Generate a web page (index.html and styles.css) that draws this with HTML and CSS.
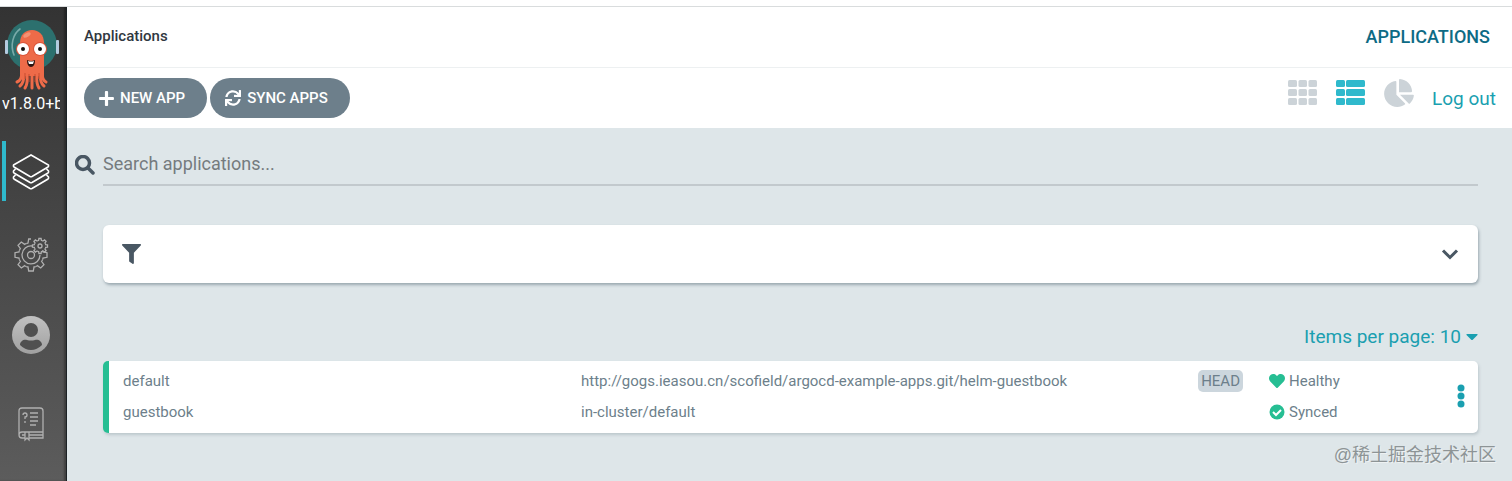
FILE: index.html
```html
<!DOCTYPE html>
<html lang="en">
<head>
    <meta charset="UTF-8">
    <meta name="viewport" content="width=device-width, initial-scale=1.0">
    <title>Applications</title>
    <link rel="stylesheet" href="styles.css">
</head>
<body>
    <div class="layout">
        <nav class="sidebar">
            <a class="logo" href="#" aria-label="Home">
                <svg width="58" height="74" viewBox="3 18 58 74">
                    <circle cx="32" cy="45" r="25" fill="#2c706e"/>
                    <path d="M14 55C10 45 13 34 20 29" fill="none" stroke="#79aaa9" stroke-width="1.6" stroke-linecap="round"/>
                    <rect x="5" y="40" width="3" height="14" rx="1" fill="#b4cbe0"/>
                    <rect x="56" y="40" width="3" height="14" rx="1" fill="#b4cbe0"/>
                    <path d="M20 43C20 35 25 30 32 30S44 35 44 43V76H20Z" fill="#ee6b49"/>
                    <g fill="none" stroke="#ee6b49" stroke-width="3" stroke-linecap="round">
                        <path d="M22 72Q22 80 17 82M24 74Q24 83 20 86M27 74Q28 84 25 88M32 74V88M37 74Q36 84 39 88M40 74Q40 83 44 86M42 72Q42 80 46 82"/>
                    </g>
                    <path d="M25 73V79M29 74V82M35 74V82M39 73V79" stroke="#c94c31" stroke-width="1"/>
                    <ellipse cx="27" cy="35" rx="4" ry="2" transform="rotate(-28 27 35)" fill="#f59274"/>
                    <circle cx="23" cy="49" r="7" fill="#d9553a"/>
                    <circle cx="40" cy="49" r="7" fill="#d9553a"/>
                    <circle cx="23" cy="49" r="6" fill="#fff"/>
                    <circle cx="40" cy="49" r="6" fill="#fff"/>
                    <circle cx="23" cy="49" r="2" fill="#111"/>
                    <circle cx="40" cy="49" r="2" fill="#111"/>
                    <path d="M27 60Q31 62 35 60Q35 67 31 67T27 60Z" fill="#2a1310"/>
                    <path d="M28 61Q31 62 34 61L33 64H29Z" fill="#fff"/>
                </svg>
            </a>
            <div class="version">v1.8.0+b</div>
            <a class="nav-item active" href="#" aria-label="Applications">
                <svg width="40" height="40" viewBox="0 0 40 40">
                    <path d="M2.500 14L20 4L37.500 14Q38 15 37 16L21 25.500Q20 26 19 25.500L3 16Q2 15 2.500 14Z"/>
                    <path d="M4.500 18L2.500 20Q2 21 3 22L19 31.500Q20 32 21 31.500L37 22Q38 21 37.500 20L35.500 18"/>
                    <path d="M4.500 24L2.500 26Q2 27 3 28L19 37.500Q20 38 21 37.500L37 28Q38 27 37.500 26L35.500 24"/>
                </svg>
            </a>
            <a class="nav-item" href="#" aria-label="Settings">
                <svg width="40" height="40" viewBox="-20 -20 40 40">
                    <defs>
                        <path id="tooth" vector-effect="non-scaling-stroke" d="M-4.700-11.400Q-4-12-3-12L-2.300-16H2.300L3-12Q4-12 4.700-11.400"/>
                    </defs>
                    <use href="#tooth" transform="rotate(90)"/>
                    <use href="#tooth" transform="rotate(135)"/>
                    <use href="#tooth" transform="rotate(180)"/>
                    <use href="#tooth" transform="rotate(225)"/>
                    <use href="#tooth" transform="rotate(270)"/>
                    <use href="#tooth" transform="rotate(315)"/>
                    <path d="M-4.700-11.400L-3-12L-2.300-16H0M1-9A9 9 0 1 0 9 0"/>
                    <circle r="3.500"/>
                    <g transform="translate(9 -9) scale(.47)">
                        <use href="#tooth"/>
                        <use href="#tooth" transform="rotate(45)"/>
                        <use href="#tooth" transform="rotate(90)"/>
                        <use href="#tooth" transform="rotate(135)"/>
                        <use href="#tooth" transform="rotate(180)"/>
                        <use href="#tooth" transform="rotate(225)"/>
                        <use href="#tooth" transform="rotate(270)"/>
                        <use href="#tooth" transform="rotate(315)"/>
                    </g>
                    <circle cx="9" cy="-9" r="2"/>
                </svg>
            </a>
            <a class="nav-item" href="#" aria-label="User info">
                <svg width="40" height="48" viewBox="0 0 40 48">
                    <defs>
                        <linearGradient id="user" x2="0" y2="1">
                            <stop stop-color="#c2c2c2"/>
                            <stop offset="1" stop-color="#a0a0a0"/>
                        </linearGradient>
                    </defs>
                    <circle cx="20" cy="20" r="19" fill="url(#user)" stroke="none"/>
                    <circle cx="20" cy="15" r="7" fill="#505050" stroke="none"/>
                    <path d="M9 30C9 26 13 24 16 25Q20 26 24 25C27 24 31 26 31 30Q26 35 20 35T9 30Z" fill="#505050" stroke="none"/>
                </svg>
            </a>
            <a class="nav-item" href="#" aria-label="Documentation">
                <svg width="40" height="40" viewBox="0 0 40 40">
                    <path d="M14 35H11Q8 35 8 32V8Q8 5 11 5H29Q32 5 32 8V35H18M8 32Q8 29 11 29H32M11 32H14M18 32H32"/>
                    <path d="M14 29V37L16 35L18 37V29M19 10H27M19 14H27M19 18H27M19 22H25"/>
                    <path d="M12 12Q12 10 14 10T16 12Q16 14 14 14V16M14 18V20"/>
                </svg>
            </a>
        </nav>

        <main class="page">
            <header class="top-bar">
                <h1 class="breadcrumb">Applications</h1>
                <span class="page-title">Applications</span>
            </header>
            <div class="toolbar">
                <div class="actions">
                    <button class="btn" type="button">
                        <svg width="15" height="17" viewBox="0 0 448 512"><path d="M416 208H272V64c0-17.670-14.330-32-32-32h-32c-17.670 0-32 14.330-32 32v144H32c-17.670 0-32 14.330-32 32v32c0 17.670 14.330 32 32 32h144v144c0 17.670 14.330 32 32 32h32c17.670 0 32-14.330 32-32V304h144c17.670 0 32-14.330 32-32v-32c0-17.670-14.330-32-32-32z"/></svg>
                        New App
                    </button>
                    <button class="btn" type="button">
                        <svg width="16" height="16" viewBox="0 0 512 512"><path d="M440.650 12.570l4 82.770A247.160 247.160 0 0 0 255.830 8C134.730 8 33.910 94.920 12.290 209.820A12 12 0 0 0 24.090 224h49.050a12 12 0 0 0 11.670-9.260 175.910 175.910 0 0 1 317-56.940l-101.460-4.860a12 12 0 0 0-12.570 12v47.410a12 12 0 0 0 12 12H500a12 12 0 0 0 12-12V12a12 12 0 0 0-12-12h-47.370a12 12 0 0 0-11.980 12.570zM255.830 432a175.610 175.610 0 0 1-146-77.800l101.800 4.870a12 12 0 0 0 12.570-12v-47.400a12 12 0 0 0-12-12H12a12 12 0 0 0-12 12V500a12 12 0 0 0 12 12h47.350a12 12 0 0 0 12-12.600l-4.150-82.570A247.170 247.170 0 0 0 255.830 504c121.110 0 221.930-86.920 243.550-201.820a12 12 0 0 0-11.800-14.180h-49.050a12 12 0 0 0-11.670 9.260A175.860 175.860 0 0 1 255.830 432z"/></svg>
                        Sync Apps
                    </button>
                </div>
                <div class="views">
                    <button class="view" type="button" aria-label="Tiles">
                        <svg width="30" height="26" viewBox="0 0 30 26">
                            <rect x="0" y="0" width="9" height="7" rx="1.500"/><rect x="10.500" y="0" width="8.500" height="7" rx="1.500"/><rect x="20.500" y="0" width="8.500" height="7" rx="1.500"/>
                            <rect x="0" y="9" width="9" height="7" rx="1.500"/><rect x="10.500" y="9" width="8.500" height="7" rx="1.500"/><rect x="20.500" y="9" width="8.500" height="7" rx="1.500"/>
                            <rect x="0" y="18" width="9" height="7" rx="1.500"/><rect x="10.500" y="18" width="8.500" height="7" rx="1.500"/><rect x="20.500" y="18" width="8.500" height="7" rx="1.500"/>
                        </svg>
                    </button>
                    <button class="view selected" type="button" aria-label="List">
                        <svg width="30" height="26" viewBox="0 0 30 26">
                            <rect x="0" y="0" width="9" height="7" rx="1.500"/><rect x="10" y="0" width="19" height="7" rx="1.500"/>
                            <rect x="0" y="9" width="9" height="7" rx="1.500"/><rect x="10" y="9" width="19" height="7" rx="1.500"/>
                            <rect x="0" y="18" width="9" height="7" rx="1.500"/><rect x="10" y="18" width="19" height="7" rx="1.500"/>
                        </svg>
                    </button>
                    <button class="view" type="button" aria-label="Summary">
                        <svg width="30" height="28" viewBox="0 0 544 512"><path d="M527.790 288H290.500l158.030 158.030c6.040 6.040 15.980 6.530 22.190.680 38.700-36.460 65.320-85.610 73.130-140.860 1.340-9.460-6.510-17.850-16.060-17.850zm-15.830-64.800C503.720 103.740 408.260 8.280 288.800.040 279.680-.590 272 7.100 272 16.240V240h223.770c9.140 0 16.820-7.680 16.190-16.800zM224 288V50.710c0-9.550-8.390-17.400-17.840-16.060C86.990 51.490-4.100 155.600.140 280.370 4.500 408.510 114.830 513.590 243.030 511.980c50.400-.630 96.970-16.870 135.260-44.030 7.900-5.600 8.420-17.230 1.570-24.080L224 288z"/></svg>
                    </button>
                    <a class="logout" href="#">Log out</a>
                </div>
            </div>

            <div class="content">
                <div class="search">
                    <label for="search" aria-label="Search applications">
                        <svg width="20" height="20" viewBox="0 0 20 20"><circle cx="8" cy="8" r="6.500"/><path d="M13 13L18 18"/></svg>
                    </label>
                    <input type="text" id="search" placeholder="Search applications...">
                </div>

                <button class="filters" type="button" aria-label="Filters">
                    <svg width="19" height="20" viewBox="0 0 512 512" preserveAspectRatio="none"><path fill="#495763" d="M487.976 0H24.028C2.710 0-8.047 25.866 7.058 40.971L192 225.941V432c0 7.831 3.821 15.170 10.237 19.662l80 55.980C298.020 518.690 320 507.493 320 487.980V225.941l184.947-184.970C520.021 25.896 509.338 0 487.976 0z"/></svg>
                    <svg width="18" height="12" viewBox="0 0 18 12"><path d="M2 2.500L9 9.500L16 2.500" fill="none" stroke="#495763" stroke-width="3"/></svg>
                </button>

                <button class="per-page" type="button">
                    Items per page: 10
                    <svg width="12" height="6" viewBox="0 0 12 6"><path d="M1 0H11Q12 0 11.500 1L7 5.500Q6 6.500 5 5.500L.500 1Q0 0 1 0Z"/></svg>
                </button>

                <div class="app-row">
                    <div class="app-name">
                        <div class="line">default</div>
                        <div class="line">guestbook</div>
                    </div>
                    <div class="app-source">
                        <div class="line">
                            <span class="url">http://gogs.ieasou.cn/scofield/argocd-example-apps.git/helm-guestbook</span>
                            <span class="tag">HEAD</span>
                        </div>
                        <div class="line">in-cluster/default</div>
                    </div>
                    <div class="app-status">
                        <div class="line">
                            <svg width="16" height="16" viewBox="0 0 512 512"><path fill="#26be93" d="M462.300 62.600C407.500 15.900 326 24.300 275.700 76.200L256 96.500l-19.700-20.300C186.100 24.300 104.500 15.900 49.700 62.600c-62.800 53.600-66.100 149.800-9.900 207.900l193.500 199.800c12.500 12.900 32.800 12.900 45.300 0l193.500-199.800c56.300-58.100 53-154.300-9.800-207.900z"/></svg>
                            Healthy
                        </div>
                        <div class="line">
                            <svg width="16" height="16" viewBox="0 0 16 16"><circle cx="8" cy="8" r="7.500" fill="#26be93"/><path d="M4 8L7 11L12 6" fill="none" stroke="#fff" stroke-width="2"/></svg>
                            Synced
                        </div>
                    </div>
                    <button class="menu" type="button" aria-label="Actions">
                        <svg width="8" height="24" viewBox="0 0 8 24"><circle cx="4" cy="4" r="3.500"/><circle cx="4" cy="12" r="3.500"/><circle cx="4" cy="20" r="3.500"/></svg>
                    </button>
                </div>
            </div>
        </main>
    </div>
    <div class="watermark">@稀土掘金技术社区</div>
</body>
</html>
```
FILE: styles.css
```css
* { box-sizing: border-box; }
body { margin: 0; padding-top: 6px; min-height: 100vh; display: flex; position: relative; background: #fff; font-family: Roboto, sans-serif; font-size: 15px; color: #6d7f8b; }
button { border: 0; padding: 0; background: none; font: inherit; cursor: pointer; }
a { text-decoration: none; }
svg { display: block; flex: none; }

.layout { display: flex; flex: 1; border-top: 1px solid #d9dcdd; }

.sidebar { width: 67px; flex: none; background: linear-gradient(#333, #5c5c5c); border-right: 1px solid #1c2225; box-shadow: inset -2px 0 2px rgba(0, 0, 0, 0.3); }
.logo { display: block; padding: 11px 3px 0; }
.version { margin: 2px 6px 27px 2px; font-size: 16px; line-height: 20px; color: #fff; white-space: nowrap; overflow: hidden; }
.nav-item { display: flex; align-items: center; justify-content: center; height: 60px; margin: 0 5px 24px 2px; padding-right: 6px; border-left: 4px solid transparent; }
.nav-item.active { border-color: #2fb9cc; }
.nav-item svg { fill: none; stroke: #b0b0b0; stroke-width: 1.3px; }
.nav-item.active svg { stroke: #fff; stroke-width: 1.6px; }

.page { flex: 1; min-width: 0; display: flex; flex-direction: column; }
.top-bar { display: flex; align-items: center; justify-content: space-between; height: 61px; padding: 0 22px 2px 17px; border-bottom: 1px solid #edf0f1; }
.breadcrumb { margin: 0; font-size: 15px; font-weight: 500; color: #30383f; }
.page-title { font-size: 18px; font-weight: 500; color: #0d6b85; text-transform: uppercase; }

.toolbar { display: flex; align-items: center; justify-content: space-between; height: 60px; padding: 0 16px 0 17px; }
.actions { display: flex; gap: 3px; }
.btn { display: flex; align-items: center; gap: 6px; height: 40px; padding: 0 22px 0 15px; border-radius: 20px; background: #6d7f8b; color: #fff; font-weight: 500; text-transform: uppercase; }
.btn svg { fill: #fff; }
.views { display: flex; align-items: center; gap: 18px; }
.view { margin-bottom: 10px; }
.view svg { fill: #ccd3d8; }
.view.selected svg { fill: #2fb9cc; }
.logout { font-size: 19px; color: #1a9fb0; }

.content { flex: 1; padding: 16px 34px 32px 36px; background: #dee6e9; }
.search { display: flex; align-items: center; margin-left: -28px; }
.search label { width: 28px; }
.search svg { fill: none; stroke: #495763; stroke-width: 3.5px; stroke-linecap: round; }
.search input { flex: 1; height: 42px; padding: 0 0 2px; border: 0; border-bottom: 2px solid #c2c9cd; background: none; font: inherit; font-size: 18px; color: #495763; outline: none; }
.search input::placeholder { color: #757b7e; }

.filters { display: flex; align-items: center; justify-content: space-between; width: 100%; height: 58px; margin: 39px 0 42px; padding: 0 19px; border-radius: 6px; background: #fff; box-shadow: 1px 2px 3px rgba(90, 110, 122, 0.5); }

.per-page { display: flex; align-items: center; gap: 5px; margin-left: auto; line-height: 24px; font-size: 19px; color: #1a9fb0; }
.per-page svg, .menu svg { fill: #1a9fb0; }

.app-row { display: grid; grid-template-columns: 458fr 688fr 188fr auto; align-items: center; height: 72px; margin-top: 12px; padding: 0 13px 2px 14px; border-left: 6px solid #26be93; border-radius: 5px; background: #fff; box-shadow: 1px 2px 3px rgba(90, 110, 122, 0.25); }
.app-source { padding-right: 26px; min-width: 0; }
.line { display: flex; align-items: center; gap: 4px; height: 31px; }
.url { flex: 1; overflow: hidden; text-overflow: ellipsis; white-space: nowrap; }
.tag { padding: 0 3px; line-height: 22px; border-radius: 5px; background: #ccd6dd; }

.watermark { position: absolute; right: 16px; bottom: 13px; font: 18px/26px "Liberation Sans", "Noto Sans CJK SC", sans-serif; color: #8d9496; text-shadow: 1px 1px 0 #eef2f3; }
```
